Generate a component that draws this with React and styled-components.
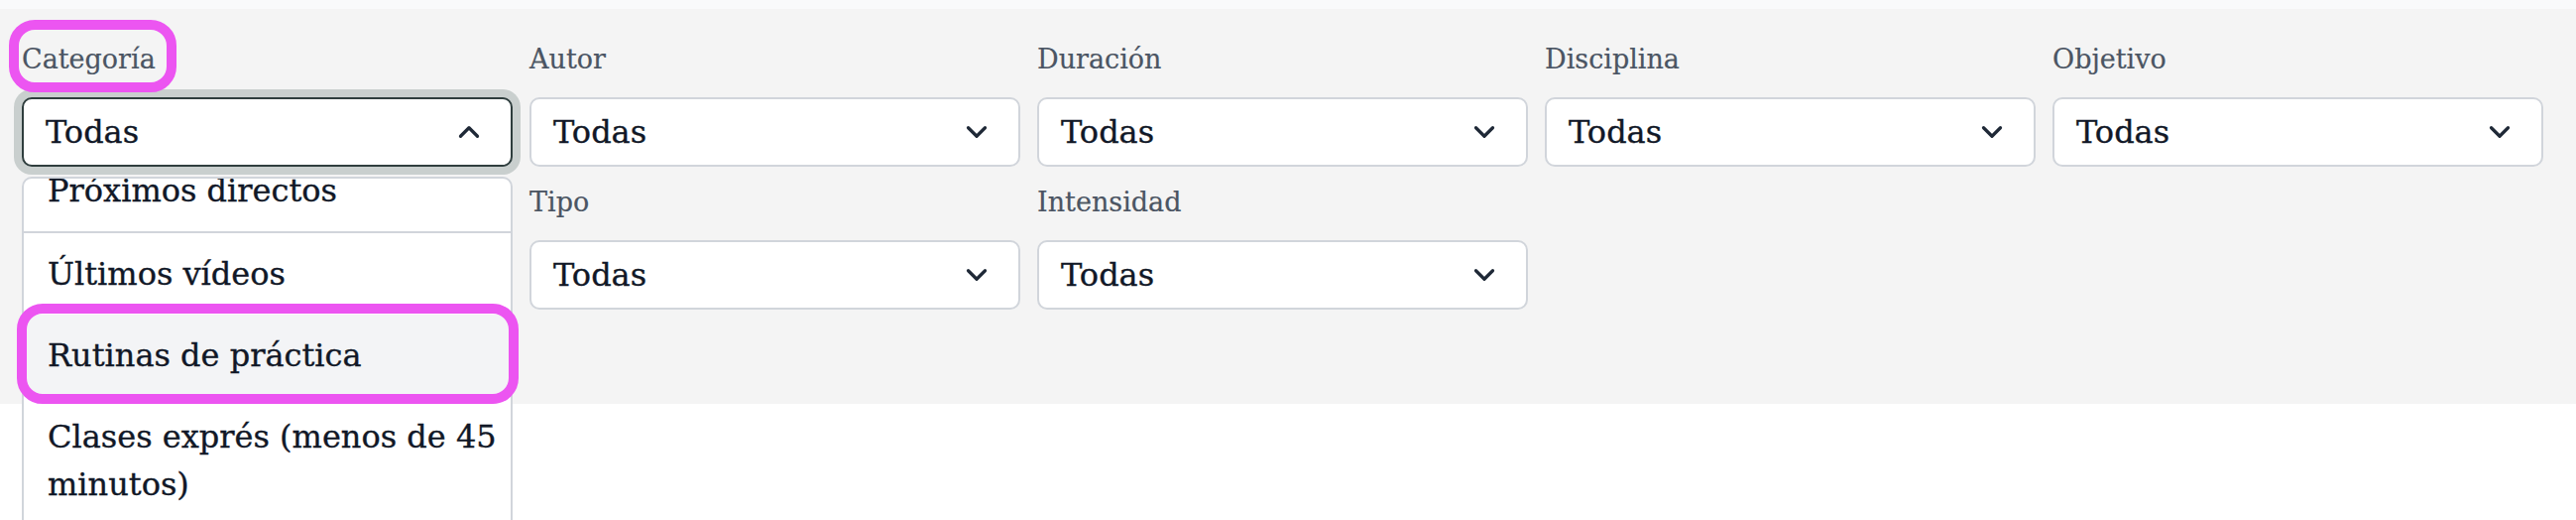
import React from "react";
import styled, { createGlobalStyle, css } from "styled-components";
import { ChevronDown, ChevronUp } from "lucide-react";

const GlobalStyle = createGlobalStyle`
  body {
    margin: 0;
    background: #ffffff;
    font-family: "DejaVu Serif", "Liberation Serif", serif;
  }
`;

const pinkRing = css`
  content: "";
  position: absolute;
  border: 10px solid #ec55f1;
  border-radius: 26px;
  pointer-events: none;
`;

const Page = styled.div`
  height: 100vh;
  overflow: hidden;
  background: #ffffff;
`;

const TopStrip = styled.div`
  height: 9px;
  background: #f9fafb;
`;

const FilterPanel = styled.section`
  background: #f4f4f4;
  padding: 31px 33px 95px 22px;
`;

const FilterGrid = styled.div`
  display: grid;
  grid-template-columns: repeat(5, 495px);
  column-gap: 17px;
  row-gap: 16px;
`;

const Field = styled.div`
  display: flex;
  flex-direction: column;
  gap: 18px;
  grid-column-start: ${(p) => p.$col || "auto"};
`;

const Label = styled.label`
  align-self: flex-start;
  position: relative;
  z-index: 2;
  font-size: 27px;
  line-height: 40px;
  color: #4b5563;
  -webkit-text-stroke: 0.2px currentColor;
  ${(p) =>
    p.$marked &&
    css`
      &::after {
        ${pinkRing};
        top: -20px;
        bottom: -13px;
        left: -13px;
        right: -21px;
      }
    `}
`;

const SelectWrap = styled.div`
  position: relative;
`;

const SelectBox = styled.div`
  display: flex;
  align-items: center;
  justify-content: space-between;
  height: 70px;
  box-sizing: border-box;
  padding: 0 25px 0 22px;
  background: #ffffff;
  border: 2px solid ${(p) => (p.$open ? "#2f3e3e" : "#d1d5db")};
  border-radius: 10px;
  box-shadow: ${(p) => (p.$open ? "0 0 0 8px #c9cfce" : "none")};
  font-size: 32px;
  color: #111827;
  -webkit-text-stroke: 0.35px currentColor;
  cursor: pointer;
`;

const Dropdown = styled.ul`
  position: absolute;
  top: 100%;
  left: 0;
  right: 0;
  z-index: 5;
  height: 400px;
  margin: 10px 0 0;
  padding: 0;
  list-style: none;
  background: #ffffff;
  border: 2px solid #d1d5db;
  border-radius: 10px 10px 0 0;
`;

const Option = styled.li`
  position: relative;
  padding: 17px 12px 17px 24px;
  font-size: 32px;
  line-height: 48px;
  color: #111827;
  -webkit-text-stroke: 0.35px currentColor;
  background: ${(p) => (p.$active ? "#f3f4f6" : "transparent")};
  ${(p) =>
    p.$active &&
    css`
      &::after {
        ${pinkRing};
        top: -11px;
        bottom: -8px;
        left: -7px;
        right: -8px;
      }
    `}
`;

// first item, half scrolled out of the list
const PartialOption = styled(Option)`
  display: flex;
  align-items: flex-end;
  height: 55px;
  box-sizing: border-box;
  padding-top: 0;
  overflow: hidden;
  border-bottom: 2px solid #d1d5db;
`;

const filters = [
  { label: "Categoría", open: true },
  { label: "Autor" },
  { label: "Duración" },
  { label: "Disciplina" },
  { label: "Objetivo" },
  { label: "Tipo", col: 2 },
  { label: "Intensidad" },
];

const categories = [
  "Últimos vídeos",
  "Rutinas de práctica",
  "Clases exprés (menos de 45 minutos)",
];

function Select({ open }) {
  const Icon = open ? ChevronUp : ChevronDown;
  return (
    <SelectWrap>
      <SelectBox $open={open}>
        <span>Todas</span>
        <Icon size={34} strokeWidth={2.3} color="#1f2937" />
      </SelectBox>
      {open && (
        <Dropdown>
          <PartialOption>Próximos directos</PartialOption>
          {categories.map((item) => (
            <Option key={item} $active={item === "Rutinas de práctica"}>
              {item}
            </Option>
          ))}
        </Dropdown>
      )}
    </SelectWrap>
  );
}

export default function App() {
  return (
    <Page>
      <GlobalStyle />
      <TopStrip />
      <FilterPanel>
        <FilterGrid>
          {filters.map((f) => (
            <Field key={f.label} $col={f.col}>
              <Label $marked={f.open}>{f.label}</Label>
              <Select open={f.open} />
            </Field>
          ))}
        </FilterGrid>
      </FilterPanel>
    </Page>
  );
}
